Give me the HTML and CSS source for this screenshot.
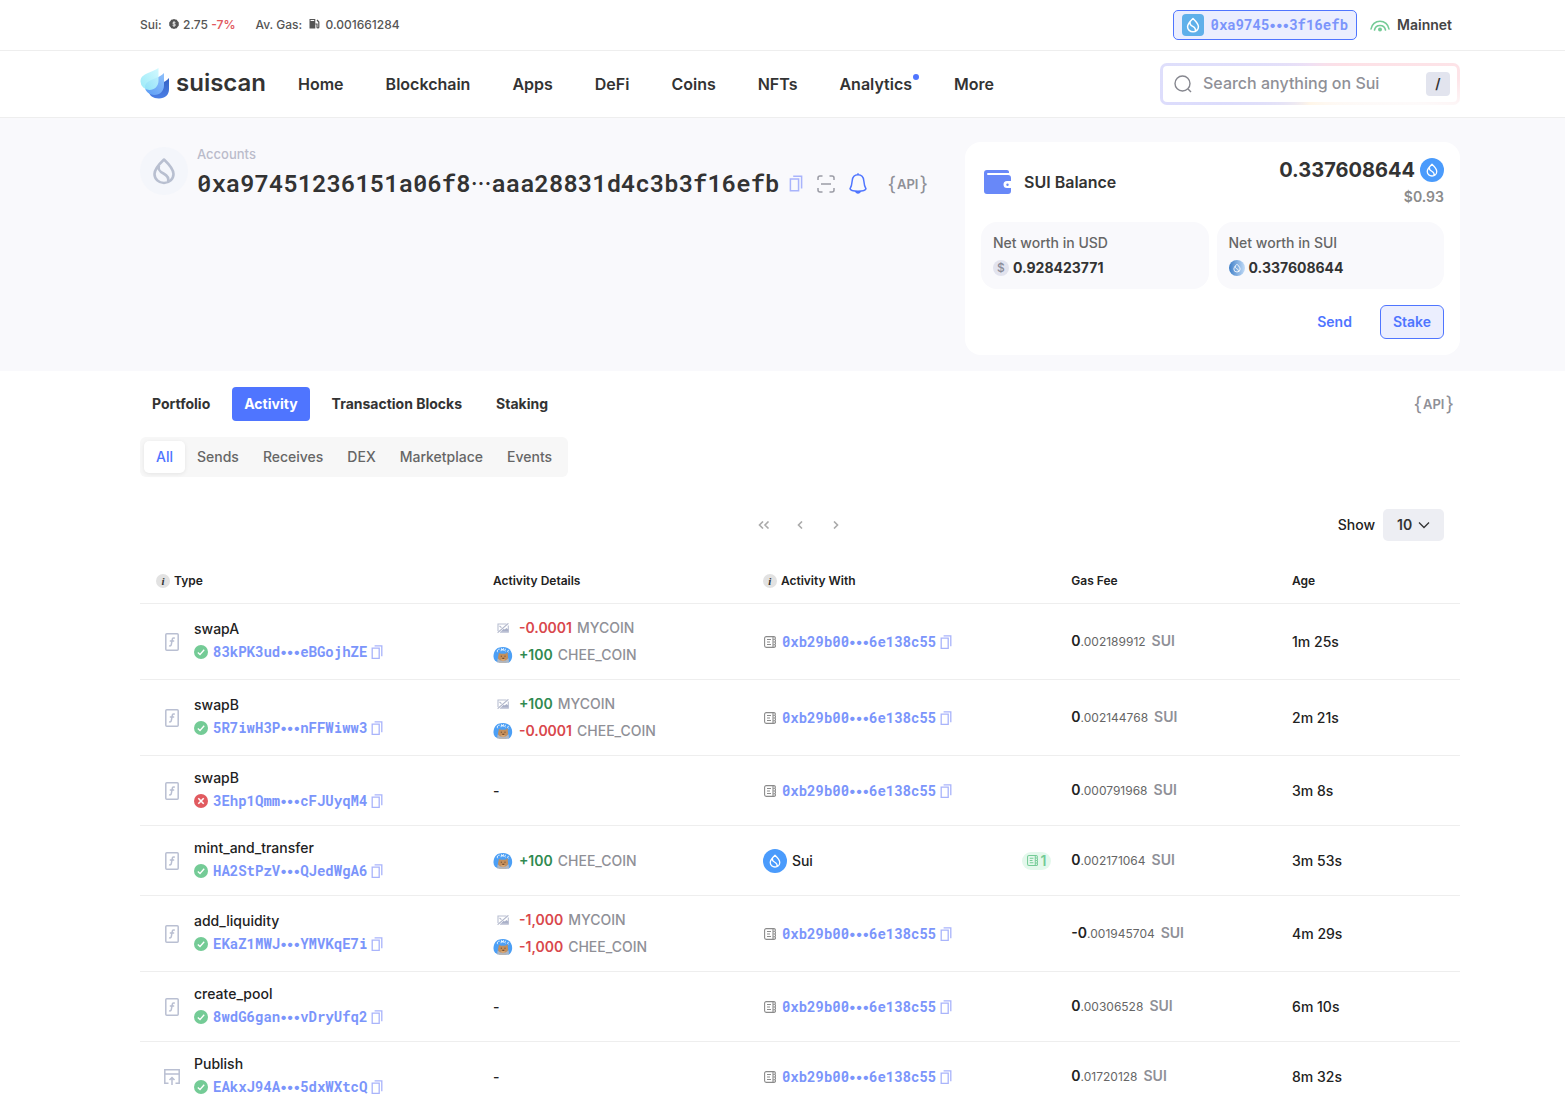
FILE: index.html
```html
<!DOCTYPE html>
<html lang="en">
<head>
<meta charset="utf-8">
<meta name="viewport" content="width=device-width, initial-scale=1">
<title>Account activity - suiscan</title>
<link rel="stylesheet" href="styles.css">
</head>
<body>
<svg class="sprite" aria-hidden="true">
  <defs>
    <linearGradient id="g-light" x1="0" y1="1" x2="1" y2="0"><stop offset="0" stop-color="#8fe8f7"/><stop offset="1" stop-color="#cdf8ff"/></linearGradient>
    <linearGradient id="g-mid" x1="0" y1="1" x2="1" y2="0"><stop offset="0" stop-color="#5b9cf5"/><stop offset="1" stop-color="#8fc0fb"/></linearGradient>
    <linearGradient id="g-deep" x1="0" y1="0" x2="0" y2="1"><stop offset="0" stop-color="#3560c4"/><stop offset="1" stop-color="#4b80e6"/></linearGradient>
    <linearGradient id="g-coin" x1="0" y1="0" x2="1" y2="0"><stop offset="0" stop-color="#3f7fc8"/><stop offset="1" stop-color="#c3dcf7"/></linearGradient>
  </defs>
  <symbol id="drop" viewBox="0 0 24 28"><path d="M12 2.500C12 2.500 2.500 11.500 2.500 17a9.500 9 0 0 0 19 0C21.500 11.500 12 2.500 12 2.500Z M7 8.500c-1.500 4.500 1 6.300 4.500 8 4 2 5.600 4.500 4.500 8.500" fill="none" stroke="currentColor" stroke-linejoin="round" stroke-width="2.600"/></symbol>
  <symbol id="copy" viewBox="0 0 12 14"><path d="M1.200 3.100h7v10.200h-7z M3.600.8h7.200v10.400" fill="none" stroke="currentColor" stroke-width="1.300"/></symbol>
  <symbol id="fn" viewBox="0 0 14 18"><rect x=".8" y=".8" width="12.400" height="16.400" rx="1" fill="none" stroke="currentColor" stroke-width="1.500"/><path d="M9.800 5.200c-1.700-.8-2.400.2-2.600 1.600l-.8 4.400c-.2 1.300-.9 2.200-2.300 1.500M4.800 8h4.400" fill="none" stroke="currentColor" stroke-width="1.500"/></symbol>
  <symbol id="publish" viewBox="0 0 18 18"><path d="M5.500 15.300H1.800V1.700h14.400v13.600h-3.700M1.800 6h14.400M9 17V9.500M6.500 12 9 9.500l2.500 2.500" fill="none" stroke="currentColor" stroke-width="1.500"/></symbol>
  <symbol id="ok" viewBox="0 0 14 14"><circle cx="7" cy="7" r="7" fill="#74cb96"/><path d="m3.800 7.500 2.200 2L10.200 4.800" fill="none" stroke="#fff" stroke-width="1.300"/></symbol>
  <symbol id="fail" viewBox="0 0 14 14"><circle cx="7" cy="7" r="7" fill="#e15a5f"/><path d="m4.300 4.300 5.400 5.400m0-5.400L4.300 9.700" fill="none" stroke="#fff" stroke-width="1.600"/></symbol>
  <symbol id="book" viewBox="0 0 12 12"><path d="M10 .6H2.200A1.600 1.600 0 0 0 .6 2.200v7.600a1.600 1.600 0 0 0 1.600 1.600H10c2 0 1.800-2.400.6-2.700 1.200-.4 1.200-2.200 0-2.700 1.200-.4 1.200-2.200 0-2.700C11.700 3 11.700.6 10 .6ZM9 .6v10.800M3 3.500h4M3 6h3M3 8.500h4" fill="none" stroke="currentColor" stroke-width="1.100"/></symbol>
  <symbol id="noimg" viewBox="0 0 12 10"><path d="M1 8V1h8.500M11.300 2.500v6.800H3" fill="none" stroke="#b9bfd2" stroke-width="1.100"/><path d="m3.500 8.800 3.300-3 1 .6 1.600-1.500 1.900 1.600v2.300z" fill="#a9b0c8"/><path d="M.6 9.700 11.400.3" stroke="#b0b6ca" stroke-width="1.100"/><path d="m2.500 3 2 1.600" stroke="#b0b6ca" stroke-width="1.100"/></symbol>
  <symbol id="chee" viewBox="0 0 20 16"><path d="M5.500.8C8.500-.3 12-.2 14.500 1c3.300 1.600 5 5 4.600 9-.3 2.500-1.500 4.500-3.100 5.500l-11-.2C2.300 14.500.6 12.500.5 9.800.4 6 2 2.200 5.500.8Z" fill="#4c9ff5"/><path d="M4.600 5.200C3.600 3.800 4.800 2 6.600 2.200M8 4.200l.7-3M8.400 2.700l1.700-.3M10 4l.6-2.800M12.500 4.200c-1.500-.4-.7-2.400.5-1.800M15.500 5.200c-1.600-.3-.9-2.300.3-1.700" fill="none" stroke="#f0f8ff" stroke-width=".9"/><path d="m6 5.700 1.800 1h4.500l2.200-1.400.6 5.200-1.600 5H6.200l-1.200-5Z" fill="#c48f5b"/><path d="M7.800 9.200h1M11.500 9.200h1M9.300 11.300h2" stroke="#5d3d2a" stroke-width="1"/><path d="m4.500 11.500 3 2h5l3.200-2.300.3 4.300H4.200Z" fill="#aeb6c2"/><path d="m7.500 12 2.500 2.500 2.500-2.500Z" fill="#d8a671"/></symbol>
</svg>

<header>
  <div class="topbar wrap">
    <div class="stats">
      <span class="stat">Sui:
        <svg class="i10" viewBox="0 0 10 10" aria-hidden="true"><path d="m5 0 1.300.6 1.500.1.700 1.300L9.700 3.300 9.800 5l-.1 1.700L8.500 8 7.800 9.300l-1.500.1L5 10l-1.300-.6-1.500-.1L1.500 8 .3 6.700.2 5l.1-1.700L1.500 2 2.200.7 3.700.6Z" fill="#555"/><path d="M6.500 3.700C6 3 3.700 3 3.700 4.100 3.700 5.200 6.500 4.700 6.500 6S4 7.100 3.500 6.200M5 2.300v5.400" fill="none" stroke="#fff" stroke-width=".8"/></svg>
        2.75 <b class="down">-7%</b></span>
      <span class="stat">Av. Gas:
        <svg class="i10 gas" viewBox="0 0 11 10" aria-hidden="true"><path d="M.5 0h5.800v9.500H.5z" fill="#555"/><path d="M1.600 1.500h3.600" stroke="#fff" stroke-width="1"/><path d="M6.300 5H8v3.200c0 1 1.800 1 1.800 0V3L8 1" fill="none" stroke="#555" stroke-width="1.200"/></svg>
        0.001661284</span>
    </div>
    <div class="session">
      <button class="wallet-btn" type="button"><span class="avatar"><svg class="avatar-drop" aria-hidden="true"><use href="#drop"/></svg></span><span class="mono">0xa9745<span class="dots">•••</span>3f16efb</span></button>
      <button class="network" type="button"><svg class="signal" viewBox="0 0 20 13" aria-hidden="true"><g fill="none" stroke="#74cb96" stroke-width="1.600" stroke-linecap="round"><path d="M1 10a9.100 9.100 0 0 1 18 0"/><path d="M4.500 11a5.600 5.600 0 0 1 11 0"/></g><circle cx="10" cy="10.500" r="2" fill="#74cb96"/></svg>Mainnet</button>
    </div>
  </div>
  <div class="navbar">
    <div class="wrap nav-in">
      <a class="logo" href="#"><svg class="logo-mark" viewBox="0 0 30 32" aria-hidden="true"><path d="M29 11v11c0 6-4 9.500-10 9.500S9 28 9 25c0-5 6-7 11-8.500 4-1.200 7-3 9-5.500Z" fill="url(#g-deep)"/><path d="M24 6v12c0 6-4 10-9.500 10C9 28 5 24 5 20c0-5 6-7 11-9 3.500-1.400 6-3 8-5Z" fill="url(#g-mid)"/><path d="M18.500 1v13c0 5-4 9-9 9A8.800 8.800 0 0 1 .5 14.500c0-4.500 3-6.500 7.500-8.500 4-1.800 8-3 10.500-5Z" fill="url(#g-light)" fill-opacity=".9"/></svg>suiscan</a>
      <nav class="menu" aria-label="Main">
        <a href="#">Home</a><a href="#">Blockchain</a><a href="#">Apps</a><a href="#">DeFi</a><a href="#">Coins</a><a href="#">NFTs</a><a class="has-dot" href="#">Analytics</a><a href="#">More</a>
      </nav>
      <label class="search">
        <svg class="lens" viewBox="0 0 18 18" aria-hidden="true"><circle cx="8.500" cy="8.500" r="7.500" fill="none" stroke="#86878f" stroke-width="1.400"/><path d="m14 14 3 3" stroke="#86878f" stroke-width="1.400"/></svg>
        <input type="search" aria-label="Search" placeholder="Search anything on Sui">
        <kbd>/</kbd>
      </label>
    </div>
  </div>
</header>

<section class="hero">
  <div class="wrap hero-in">
    <div class="account">
      <span class="badge"><svg class="badge-drop" aria-hidden="true"><use href="#drop"/></svg></span>
      <div>
        <p class="crumb">Accounts</p>
        <div class="address-row">
          <h1 class="mono">0xa97451236151a06f8<span class="dots">···</span>aaa28831d4c3b3f16efb</h1>
          <div class="actions">
            <button class="icon-btn" type="button" aria-label="Copy address"><svg class="copy-lg"><use href="#copy"/></svg></button>
            <button class="icon-btn gray" type="button" aria-label="Show QR code"><svg class="i18" viewBox="0 0 18 18"><path d="M1 5V3a2 2 0 0 1 2-2h2.500M12.500 1H15a2 2 0 0 1 2 2v2M17 13v2a2 2 0 0 1-2 2h-2.500M5.500 17H3a2 2 0 0 1-2-2v-2M4 9h10" fill="none" stroke="currentColor" stroke-width="1.500"/></svg></button>
            <button class="icon-btn blue" type="button" aria-label="Notifications"><svg class="bell" viewBox="0 0 18 22"><path d="M9 1.800c3.700 0 5.500 2.500 5.800 6 .3 4 .7 5.700 2.200 8-.5 1.600-3.800 2.400-8 2.400s-7.500-.8-8-2.400c1.500-2.300 1.900-4 2.200-8 .3-3.500 2.100-6 5.800-6ZM9 .3v1.500" fill="none" stroke="currentColor" stroke-width="1.500"/><path d="M6 18h6c-.4 3.500-5.600 3.500-6 0Z" fill="currentColor"/></svg></button>
            <button class="api" type="button"><span class="brace">{</span>API<span class="brace">}</span></button>
          </div>
        </div>
      </div>
    </div>
    <aside class="card">
      <div class="card-top">
        <svg class="wallet" viewBox="0 0 28 24" aria-hidden="true"><path d="M3 0h20c1 0 2 .8 2 2v1H4c-1.300 0-1.300 2 0 2h20a3 3 0 0 1 3 3v3h-4a3.500 3.500 0 0 0 0 7h4v3a3 3 0 0 1-3 3H3a3 3 0 0 1-3-3V3a3 3 0 0 1 3-3Z" fill="#6888f8"/><path d="M23.500 12.200H28v5h-4.500a2.500 2.500 0 0 1 0-5Z" fill="#fff"/><circle cx="23.500" cy="14.700" r="1.200" fill="#6888f8"/></svg>
        <h2>SUI Balance</h2>
        <div class="balance">
          <p class="amount">0.337608644 <span class="coin"><svg class="coin-drop" aria-hidden="true"><use href="#drop"/></svg></span></p>
          <p class="usd">$0.93</p>
        </div>
      </div>
      <div class="worths">
        <div class="worth"><p>Net worth in USD</p><p class="worth-val"><span class="coin-sm dollar">$</span>0.928423771</p></div>
        <div class="worth"><p>Net worth in SUI</p><p class="worth-val"><svg class="coin-sm" viewBox="0 0 16 16" aria-hidden="true"><circle cx="8" cy="8" r="8" fill="url(#g-coin)"/><svg x="4" y="3" width="8" height="10" color="#fff"><use href="#drop"/></svg></svg>0.337608644</p></div>
      </div>
      <div class="card-actions"><button class="btn" type="button">Send</button><button class="btn outlined" type="button">Stake</button></div>
    </aside>
  </div>
</section>

<main class="wrap">
  <div class="tabs-row">
    <div class="tabs"><button type="button">Portfolio</button><button class="active" type="button">Activity</button><button type="button">Transaction Blocks</button><button type="button">Staking</button></div>
    <button class="api" type="button"><span class="brace">{</span>API<span class="brace">}</span></button>
  </div>
  <div class="filters"><button class="active" type="button">All</button><button type="button">Sends</button><button type="button">Receives</button><button type="button">DEX</button><button type="button">Marketplace</button><button type="button">Events</button></div>

  <div class="controls">
    <div class="pager">
      <button type="button" aria-label="First page"><svg class="chev-dbl" viewBox="0 0 12 8"><path d="M5 .5 1.500 4 5 7.500M10.500.5 7 4l3.500 3.500"/></svg></button>
      <button type="button" aria-label="Previous page"><svg class="chev" viewBox="0 0 6 8"><path d="M5 .5 1.500 4 5 7.500"/></svg></button>
      <button type="button" aria-label="Next page"><svg class="chev" viewBox="0 0 6 8"><path d="M1 .5 4.500 4 1 7.500"/></svg></button>
    </div>
    <div class="show"><label for="size">Show</label><span class="select"><select id="size"><option>10</option><option>20</option><option>50</option></select><svg class="caret" viewBox="0 0 12 8" aria-hidden="true"><path d="m1 1.500 5 5 5-5" fill="none" stroke="#333" stroke-width="1.300"/></svg></span></div>
  </div>

  <table>
    <colgroup><col class="c-type"><col class="c-details"><col class="c-with"><col class="c-gas"><col></colgroup>
    <thead><tr><th><span class="th"><i class="info">i</i>Type</span></th><th>Activity Details</th><th><span class="th"><i class="info">i</i>Activity With</span></th><th>Gas Fee</th><th>Age</th></tr></thead>
    <tbody>
      <tr>
        <td><div class="type"><svg class="kind"><use href="#fn"/></svg><div class="call"><p>swapA</p><p class="hash"><svg class="i14"><use href="#ok"/></svg><a class="mono" href="#">83kPK3ud<span class="dots">•••</span>eBGojhZE</a><svg class="copy"><use href="#copy"/></svg></p></div></div></td>
        <td><div class="details"><p><svg class="token sm"><use href="#noimg"/></svg><b class="neg">-0.0001</b>MYCOIN</p><p><svg class="token"><use href="#chee"/></svg><b class="pos">+100</b>CHEE_COIN</p></div></td>
        <td><div class="with"><svg class="i12"><use href="#book"/></svg><a class="mono" href="#">0xb29b00<span class="dots">•••</span>6e138c55</a><svg class="copy"><use href="#copy"/></svg></div></td>
        <td class="fee"><b>0</b><small>.002189912</small>SUI</td><td>1m 25s</td>
      </tr>
      <tr>
        <td><div class="type"><svg class="kind"><use href="#fn"/></svg><div class="call"><p>swapB</p><p class="hash"><svg class="i14"><use href="#ok"/></svg><a class="mono" href="#">5R7iwH3P<span class="dots">•••</span>nFFWiww3</a><svg class="copy"><use href="#copy"/></svg></p></div></div></td>
        <td><div class="details"><p><svg class="token sm"><use href="#noimg"/></svg><b class="pos">+100</b>MYCOIN</p><p><svg class="token"><use href="#chee"/></svg><b class="neg">-0.0001</b>CHEE_COIN</p></div></td>
        <td><div class="with"><svg class="i12"><use href="#book"/></svg><a class="mono" href="#">0xb29b00<span class="dots">•••</span>6e138c55</a><svg class="copy"><use href="#copy"/></svg></div></td>
        <td class="fee"><b>0</b><small>.002144768</small>SUI</td><td>2m 21s</td>
      </tr>
      <tr>
        <td><div class="type"><svg class="kind"><use href="#fn"/></svg><div class="call"><p>swapB</p><p class="hash"><svg class="i14"><use href="#fail"/></svg><a class="mono" href="#">3Ehp1Qmm<span class="dots">•••</span>cFJUyqM4</a><svg class="copy"><use href="#copy"/></svg></p></div></div></td>
        <td>-</td>
        <td><div class="with"><svg class="i12"><use href="#book"/></svg><a class="mono" href="#">0xb29b00<span class="dots">•••</span>6e138c55</a><svg class="copy"><use href="#copy"/></svg></div></td>
        <td class="fee"><b>0</b><small>.000791968</small>SUI</td><td>3m 8s</td>
      </tr>
      <tr>
        <td><div class="type"><svg class="kind"><use href="#fn"/></svg><div class="call"><p>mint_and_transfer</p><p class="hash"><svg class="i14"><use href="#ok"/></svg><a class="mono" href="#">HA2StPzV<span class="dots">•••</span>QJedWgA6</a><svg class="copy"><use href="#copy"/></svg></p></div></div></td>
        <td><div class="details"><p><svg class="token"><use href="#chee"/></svg><b class="pos">+100</b>CHEE_COIN</p></div></td>
        <td><div class="with named"><span class="coin"><svg class="coin-drop"><use href="#drop"/></svg></span>Sui<span class="count"><svg class="count-icon"><use href="#book"/></svg>1</span></div></td>
        <td class="fee"><b>0</b><small>.002171064</small>SUI</td><td>3m 53s</td>
      </tr>
      <tr>
        <td><div class="type"><svg class="kind"><use href="#fn"/></svg><div class="call"><p>add_liquidity</p><p class="hash"><svg class="i14"><use href="#ok"/></svg><a class="mono" href="#">EKaZ1MWJ<span class="dots">•••</span>YMVKqE7i</a><svg class="copy"><use href="#copy"/></svg></p></div></div></td>
        <td><div class="details"><p><svg class="token sm"><use href="#noimg"/></svg><b class="neg">-1,000</b>MYCOIN</p><p><svg class="token"><use href="#chee"/></svg><b class="neg">-1,000</b>CHEE_COIN</p></div></td>
        <td><div class="with"><svg class="i12"><use href="#book"/></svg><a class="mono" href="#">0xb29b00<span class="dots">•••</span>6e138c55</a><svg class="copy"><use href="#copy"/></svg></div></td>
        <td class="fee"><b>-0</b><small>.001945704</small>SUI</td><td>4m 29s</td>
      </tr>
      <tr>
        <td><div class="type"><svg class="kind"><use href="#fn"/></svg><div class="call"><p>create_pool</p><p class="hash"><svg class="i14"><use href="#ok"/></svg><a class="mono" href="#">8wdG6gan<span class="dots">•••</span>vDryUfq2</a><svg class="copy"><use href="#copy"/></svg></p></div></div></td>
        <td>-</td>
        <td><div class="with"><svg class="i12"><use href="#book"/></svg><a class="mono" href="#">0xb29b00<span class="dots">•••</span>6e138c55</a><svg class="copy"><use href="#copy"/></svg></div></td>
        <td class="fee"><b>0</b><small>.00306528</small>SUI</td><td>6m 10s</td>
      </tr>
      <tr>
        <td><div class="type"><svg class="kind"><use href="#publish"/></svg><div class="call"><p>Publish</p><p class="hash"><svg class="i14"><use href="#ok"/></svg><a class="mono" href="#">EAkxJ94A<span class="dots">•••</span>5dxWXtcQ</a><svg class="copy"><use href="#copy"/></svg></p></div></div></td>
        <td>-</td>
        <td><div class="with"><svg class="i12"><use href="#book"/></svg><a class="mono" href="#">0xb29b00<span class="dots">•••</span>6e138c55</a><svg class="copy"><use href="#copy"/></svg></div></td>
        <td class="fee"><b>0</b><small>.01720128</small>SUI</td><td>8m 32s</td>
      </tr>
    </tbody>
  </table>
</main>
</body>
</html>
```
FILE: styles.css
```css
*, *::before, *::after { box-sizing: border-box; }
body { margin: 0; background: #fff; color: #222; font: 500 14px/20px Inter, "Liberation Sans", sans-serif; }
p, h1, h2 { margin: 0; }
a { color: inherit; text-decoration: none; }
button { margin: 0; padding: 0; border: 0; background: none; color: inherit; font: inherit; cursor: pointer; }
svg { display: block; flex: none; }
.sprite { position: absolute; width: 0; height: 0; }
.wrap { padding: 0 105px 0 140px; }
.mono { font-family: "Roboto Mono", "DejaVu Sans Mono", "Liberation Mono", monospace; }
.dots { font-family: Inter, sans-serif; }

.i10 { display: inline-block; width: 10px; height: 10px; margin: 0 1px 0 4px; }
.i10.gas { width: 11px; margin-right: 2px; }
.i12 { width: 12px; height: 12px; }
.i14 { width: 14px; height: 14px; }
.i18 { width: 18px; height: 18px; }
.copy { width: 12px; height: 14px; color: #a9b4fb; }

/* Top bar */
.topbar { display: flex; justify-content: space-between; align-items: center; height: 50px; font-size: 12px; color: #555; }
.stats { display: flex; gap: 20px; }
.down { font-weight: 600; color: #e15a5f; }
.session { display: flex; align-items: center; gap: 13px; padding-right: 8px; }
.wallet-btn { display: flex; align-items: center; gap: 6px; height: 30px; padding: 0 8px; border: 1px solid #4f75ff; border-radius: 5px; background: #ebeefe; color: #7b95fb; font-size: 14px; font-weight: 700; }
.avatar { display: grid; place-items: center; width: 22px; height: 22px; border-radius: 4px; background: #5fb0ea; color: #fff; }
.avatar-drop { width: 14px; height: 16px; }
.network { display: flex; align-items: center; gap: 7px; color: #444; font-size: 14px; font-weight: 600; }
.signal { width: 20px; height: 13px; }

/* Main navigation */
.navbar { border-top: 1px solid #eee; border-bottom: 1px solid #eee; }
.nav-in { display: flex; align-items: center; height: 66px; }
.logo { display: flex; align-items: center; gap: 6px; padding-bottom: 2px; font-size: 24px; line-height: 30px; font-weight: 600; color: #333; }
.logo-mark { width: 30px; height: 32px; }
.menu { display: flex; gap: 42px; margin-left: 32px; font-size: 16px; font-weight: 600; color: #333; }
.has-dot { position: relative; }
.has-dot::after { content: ""; position: absolute; top: 0; right: -7px; width: 6px; height: 6px; border-radius: 50%; background: #4f75ff; }
.search { display: flex; align-items: center; gap: 11px; width: 300px; height: 42px; margin-left: auto; padding: 0 7px 0 11px; border: 3px solid transparent; border-radius: 7px; background: linear-gradient(#fff, #fff) padding-box, conic-gradient(#efe0f4 0deg, #fde0e6 60deg, #fde4e8 88deg, #fdfafa 100deg, #fff6e8 180deg, #dcdcfc 258deg, #dfdffb 280deg, #efe0f4 360deg) border-box; }
.lens { width: 18px; height: 18px; }
.search input { flex: 1; min-width: 0; padding: 0 0 2px; border: 0; outline: 0; background: none; color: #333; font: 500 16px/20px Inter, sans-serif; }
.search input::placeholder { color: #8f9097; opacity: 1; }
.search kbd { width: 24px; border-radius: 4px; background: #e2e4ee; color: #333; font: 600 14px/24px Inter, sans-serif; text-align: center; }

/* Account header */
.hero { background: #f9f9fc; }
.hero-in { display: flex; justify-content: space-between; align-items: flex-start; padding-top: 24px; padding-bottom: 16px; }
.account { display: flex; gap: 9px; padding-top: 2px; }
.badge { display: grid; place-items: center; width: 48px; height: 48px; margin-top: 3px; border-radius: 50%; background: #f4f6fb; color: #b8bfd0; }
.badge-drop { width: 24px; height: 28px; }
.crumb { font-size: 13px; color: #bbbccb; }
.address-row { display: flex; align-items: center; gap: 10px; margin-top: 3px; }
.address-row h1 { font-size: 24px; line-height: 32px; font-weight: 600; color: #333; }
.address-row .dots { font-weight: 400; }
.actions { display: flex; align-items: center; gap: 14px; }
.icon-btn { color: #a9b4fb; }
.icon-btn.gray { color: #9b9ca5; }
.icon-btn.blue { color: #4f75ff; }
.copy-lg { width: 14px; height: 17px; }
.bell { width: 18px; height: 22px; }
.api { display: flex; align-items: center; gap: 1px; padding: 0 6px; font-size: 13px; font-weight: 600; color: #8f9097; }
.brace { font-size: 20px; font-weight: 400; }

.card { width: 495px; padding: 16px; border-radius: 16px; background: #fff; }
.card-top { display: flex; align-items: center; }
.wallet { width: 28px; height: 24px; margin: 0 12px 2px 3px; }
.card h2 { padding-bottom: 2px; font-size: 16px; line-height: 24px; font-weight: 600; color: #333; }
.balance { margin-left: auto; text-align: right; }
.amount { display: flex; align-items: center; gap: 5px; font-size: 20px; line-height: 24px; font-weight: 700; color: #333; }
.coin { display: grid; place-items: center; width: 24px; height: 24px; border-radius: 50%; background: #4a9bfc; color: #fff; }
.coin-drop { width: 12px; height: 14px; }
.usd { margin-top: 5px; font-weight: 600; color: #8b8b8b; }
.worths { display: grid; grid-template-columns: 1fr 1fr; gap: 8px; margin-top: 15px; }
.worth { padding: 11px 12px; border-radius: 16px; background: #f9f9fc; color: #666; }
.worth-val { display: flex; align-items: center; gap: 4px; margin-top: 5px; font-weight: 700; color: #333; }
.coin-sm { width: 16px; height: 16px; }
.dollar { border-radius: 50%; background: #e2e3ee; color: #8b8c99; font-size: 12px; line-height: 16px; font-weight: 500; text-align: center; }
.card-actions { display: flex; justify-content: flex-end; gap: 15px; margin-top: 16px; }
.btn { height: 34px; padding: 0 12px; border: 1px solid transparent; border-radius: 6px; color: #4f75ff; font-weight: 600; }
.btn.outlined { border-color: #4f75ff; background: #ebeefe; }

/* Tabs and filters */
.tabs-row { display: flex; justify-content: space-between; padding-top: 16px; }
.tabs { display: flex; gap: 10px; }
.tabs button { height: 34px; padding: 0 12px; border-radius: 4px; color: #333; font-weight: 700; }
.tabs .active { background: #4f75ff; color: #fff; }
.filters { display: flex; width: fit-content; margin-top: 16px; padding: 4px; border-radius: 6px; background: #f7f7f7; color: #666; }
.filters button { height: 32px; padding: 0 12px; border-radius: 5px; }
.filters .active { background: #fff; color: #4f75ff; box-shadow: 0 1px 4px rgba(0, 0, 0, .08); }

.controls { display: grid; grid-template-columns: 1fr auto 1fr; align-items: center; margin-top: 32px; }
.pager { display: flex; grid-column: 2; }
.pager button { display: grid; place-items: center; width: 36px; height: 32px; }
.pager path { fill: none; stroke: #aaa; stroke-width: 1.6; }
.chev { width: 6px; height: 8px; }
.chev-dbl { width: 12px; height: 8px; }
.show { display: flex; justify-content: flex-end; align-items: center; gap: 8px; padding-right: 16px; }
.select { display: grid; align-items: center; }
.select select { grid-area: 1 / 1; appearance: none; width: 61px; height: 32px; padding: 0 14px; border: 0; border-radius: 5px; background: #edeef3; color: #333; font: 600 14px/20px Inter, sans-serif; }
.caret { grid-area: 1 / 1; justify-self: end; width: 12px; height: 8px; margin-right: 14px; pointer-events: none; }

/* Activity table */
table { width: 100%; margin-top: 16px; border-collapse: separate; border-spacing: 0; table-layout: fixed; }
.c-type { width: 26.74%; }
.c-details { width: 20.45%; }
.c-with { width: 23.37%; }
.c-gas { width: 16.72%; }
th { height: 47px; padding: 2px 0 0; border-bottom: 1px solid #eee; font-size: 12px; font-weight: 600; text-align: left; }
th:first-child { padding-left: 16px; }
.th { display: flex; align-items: center; gap: 4px; }
.info { width: 14px; border-radius: 50%; background: #e2e2e2; color: #333; font: italic 700 11px/14px "Liberation Serif", serif; text-align: center; }
td { padding: 10px 0; border-bottom: 1px solid #eee; }
.type { display: flex; align-items: center; gap: 13px; padding-left: 23px; }
.type p { line-height: 23px; }
.call { padding-bottom: 3px; }
.kind { width: 18px; height: 18px; color: #b9bfd2; }
.hash, .with { display: flex; align-items: center; gap: 4px; }
.hash .i14 { margin-right: 1px; }
td .mono { color: #7b95fb; font-weight: 700; }
.details { display: grid; gap: 7px; padding: 4px 0; color: #8f9097; }
.details p { display: flex; align-items: center; }
.token { width: 20px; height: 16px; margin-right: 6px; }
.token.sm { padding: 3px 4px; }
.details b { margin-right: 5px; font-weight: 600; }
.neg { color: #d9474c; }
.pos { color: #2f8a50; }
.with { color: #8b8b8b; }
.with .i12 { margin: 0 2px 0 1px; }
.with.named { gap: 5px; padding-right: 20px; color: #222; }
.count { display: flex; align-items: center; gap: 2px; margin-left: auto; padding: 0 5px; border-radius: 9px; background: #e4f8ec; color: #74cb96; line-height: 18px; font-weight: 600; }
.count-icon { width: 11px; height: 11px; }
.fee { color: #8f9097; font-weight: 600; }
.fee b { color: #222; font-weight: 600; }
.fee small { margin-right: 6px; color: #666; font-size: 12px; font-weight: 400; }
```
